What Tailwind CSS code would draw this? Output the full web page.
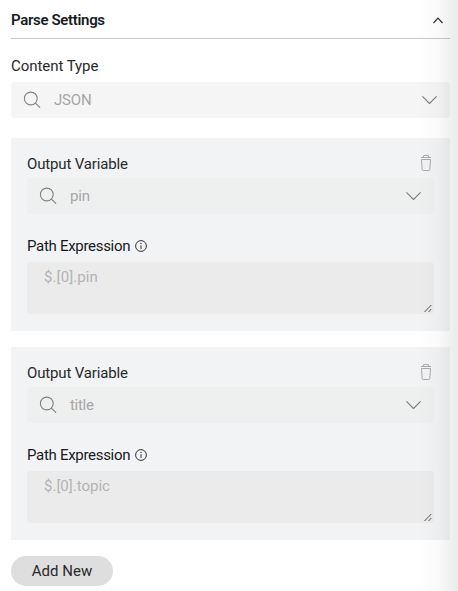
<!DOCTYPE html>
<html lang="en">
<head>
<meta charset="utf-8">
<title>Parse Settings</title>
<script src="https://cdn.jsdelivr.net/npm/@tailwindcss/browser@4"></script>
</head>
<body class="relative h-[591px] w-[458px] overflow-hidden bg-white font-['Roboto',sans-serif] text-[15px] leading-5 text-[#292929]">
<svg class="hidden">
  <symbol id="search" viewBox="0 0 18 18"><g fill="none" stroke="currentColor" stroke-width="1.1" stroke-linecap="round"><circle cx="7.8" cy="7.5" r="6.4"/><path d="M12.4 12.1l4.4 4.3"/></g></symbol>
  <symbol id="down" viewBox="0 0 16 10"><path d="M1.7 1.7L8.5 8.5l6.8-6.8" fill="none" stroke="currentColor" stroke-width="1.15" stroke-linecap="round" stroke-linejoin="round"/></symbol>
  <symbol id="trash" viewBox="0 0 12 18"><g fill="none" stroke="currentColor" stroke-linejoin="round"><path d="M1 3.5h10M3.2 3.3l.5-1.8h4.6l.5 1.8M1.5 5.5h9l-.7 10q-.1 1-1 1H3.2q-.9 0-1-1z"/></g></symbol>
  <symbol id="info" viewBox="0 0 12 12"><circle cx="6" cy="6" r="5.4" fill="none" stroke="currentColor"/><path d="M6 5.2v3.7" fill="none" stroke="currentColor" stroke-width="1"/><circle cx="6" cy="3.4" r=".65" fill="currentColor"/></symbol>
  <symbol id="grip" viewBox="0 0 8 9"><path d="M.5 8L7.3 1M4.5 8l2.8-3" fill="none" stroke="currentColor" stroke-width=".9"/></symbol>
</svg>
<main class="ml-[11px] w-[439px]">
  <header class="flex h-[39px] items-center justify-between border-b border-[#c8c8c8] pr-[7px]">
    <h1 class="pt-px text-[15px] font-semibold tracking-[-0.33px] text-[#171b1f]">Parse Settings</h1>
    <svg class="mt-[3px] h-[7px] w-[10px] text-[#333]" viewBox="0 0 10 7"><path d="M.5 6L5 1.1 9.5 6" fill="none" stroke="currentColor" stroke-width="1.2"/></svg>
  </header>
  <div class="mt-[17px] h-[26px] tracking-[-0.05px]">Content Type</div>
  <div class="flex h-9 items-center rounded bg-[#f5f5f5] pr-[13px] pl-3 text-[#a6a6a6]">
    <svg class="h-[18px] w-[18px] text-[#808080]"><use href="#search"/></svg>
    <span class="ml-[13px] tracking-[-0.2px]">JSON</span>
    <svg class="ml-auto h-[10px] w-4 text-[#808080]"><use href="#down"/></svg>
  </div>

  <section class="mt-5 h-[193px] bg-[#f2f3f5] px-4 pt-4">
    <div class="flex h-6 items-start justify-between pr-[2px]"><span class="tracking-[-0.15px]">Output Variable</span><svg class="h-[18px] w-3 text-[#aaa]"><use href="#trash"/></svg></div>
    <div class="flex h-9 items-center rounded bg-[#eef0f0] pr-[13px] pl-3 text-[#a6a6a6]">
      <svg class="h-[18px] w-[18px] text-[#808080]"><use href="#search"/></svg>
      <span class="ml-[13px] tracking-[-0.1px]">pin</span>
      <svg class="ml-auto h-[10px] w-4 text-[#808080]"><use href="#down"/></svg>
    </div>
    <div class="mt-[22px] flex h-[26px] items-start gap-[5px] text-[#17191b]"><span class="tracking-[-0.3px]">Path Expression</span><svg class="mt-1 h-3 w-3 text-[#333]"><use href="#info"/></svg></div>
    <div class="flex h-[52px] items-end justify-between rounded bg-[#ebebeb] pr-[2px] pl-[17px] text-[#b3b3b3]"><span class="self-start pt-[5px] tracking-[0.1px]">$.[0].pin</span><svg class="mb-px h-[9px] w-2 text-[#444]"><use href="#grip"/></svg></div>
  </section>

  <section class="mt-4 h-[193px] bg-[#f2f3f5] px-4 pt-4">
    <div class="flex h-6 items-start justify-between pr-[2px]"><span class="tracking-[-0.15px]">Output Variable</span><svg class="h-[18px] w-3 text-[#aaa]"><use href="#trash"/></svg></div>
    <div class="flex h-9 items-center rounded bg-[#eef0f0] pr-[13px] pl-3 text-[#a6a6a6]">
      <svg class="h-[18px] w-[18px] text-[#808080]"><use href="#search"/></svg>
      <span class="ml-[13px] tracking-[-0.3px]">title</span>
      <svg class="ml-auto h-[10px] w-4 text-[#808080]"><use href="#down"/></svg>
    </div>
    <div class="mt-[22px] flex h-[26px] items-start gap-[5px] text-[#17191b]"><span class="tracking-[-0.3px]">Path Expression</span><svg class="mt-1 h-3 w-3 text-[#333]"><use href="#info"/></svg></div>
    <div class="flex h-[52px] items-end justify-between rounded bg-[#ebebeb] pr-[2px] pl-[17px] text-[#b3b3b3]"><span class="self-start pt-[5px]">$.[0].topic</span><svg class="mb-px h-[9px] w-2 text-[#444]"><use href="#grip"/></svg></div>
  </section>
  <button class="mt-4 flex h-[30px] w-[102px] items-center justify-center rounded-full bg-[#dedede] tracking-[0.05px]">Add New</button>
</main>
<div class="pointer-events-none absolute inset-y-0 right-0 w-10 bg-linear-to-r from-black/0 via-black/2 to-black/8"></div>
</body>
</html>
